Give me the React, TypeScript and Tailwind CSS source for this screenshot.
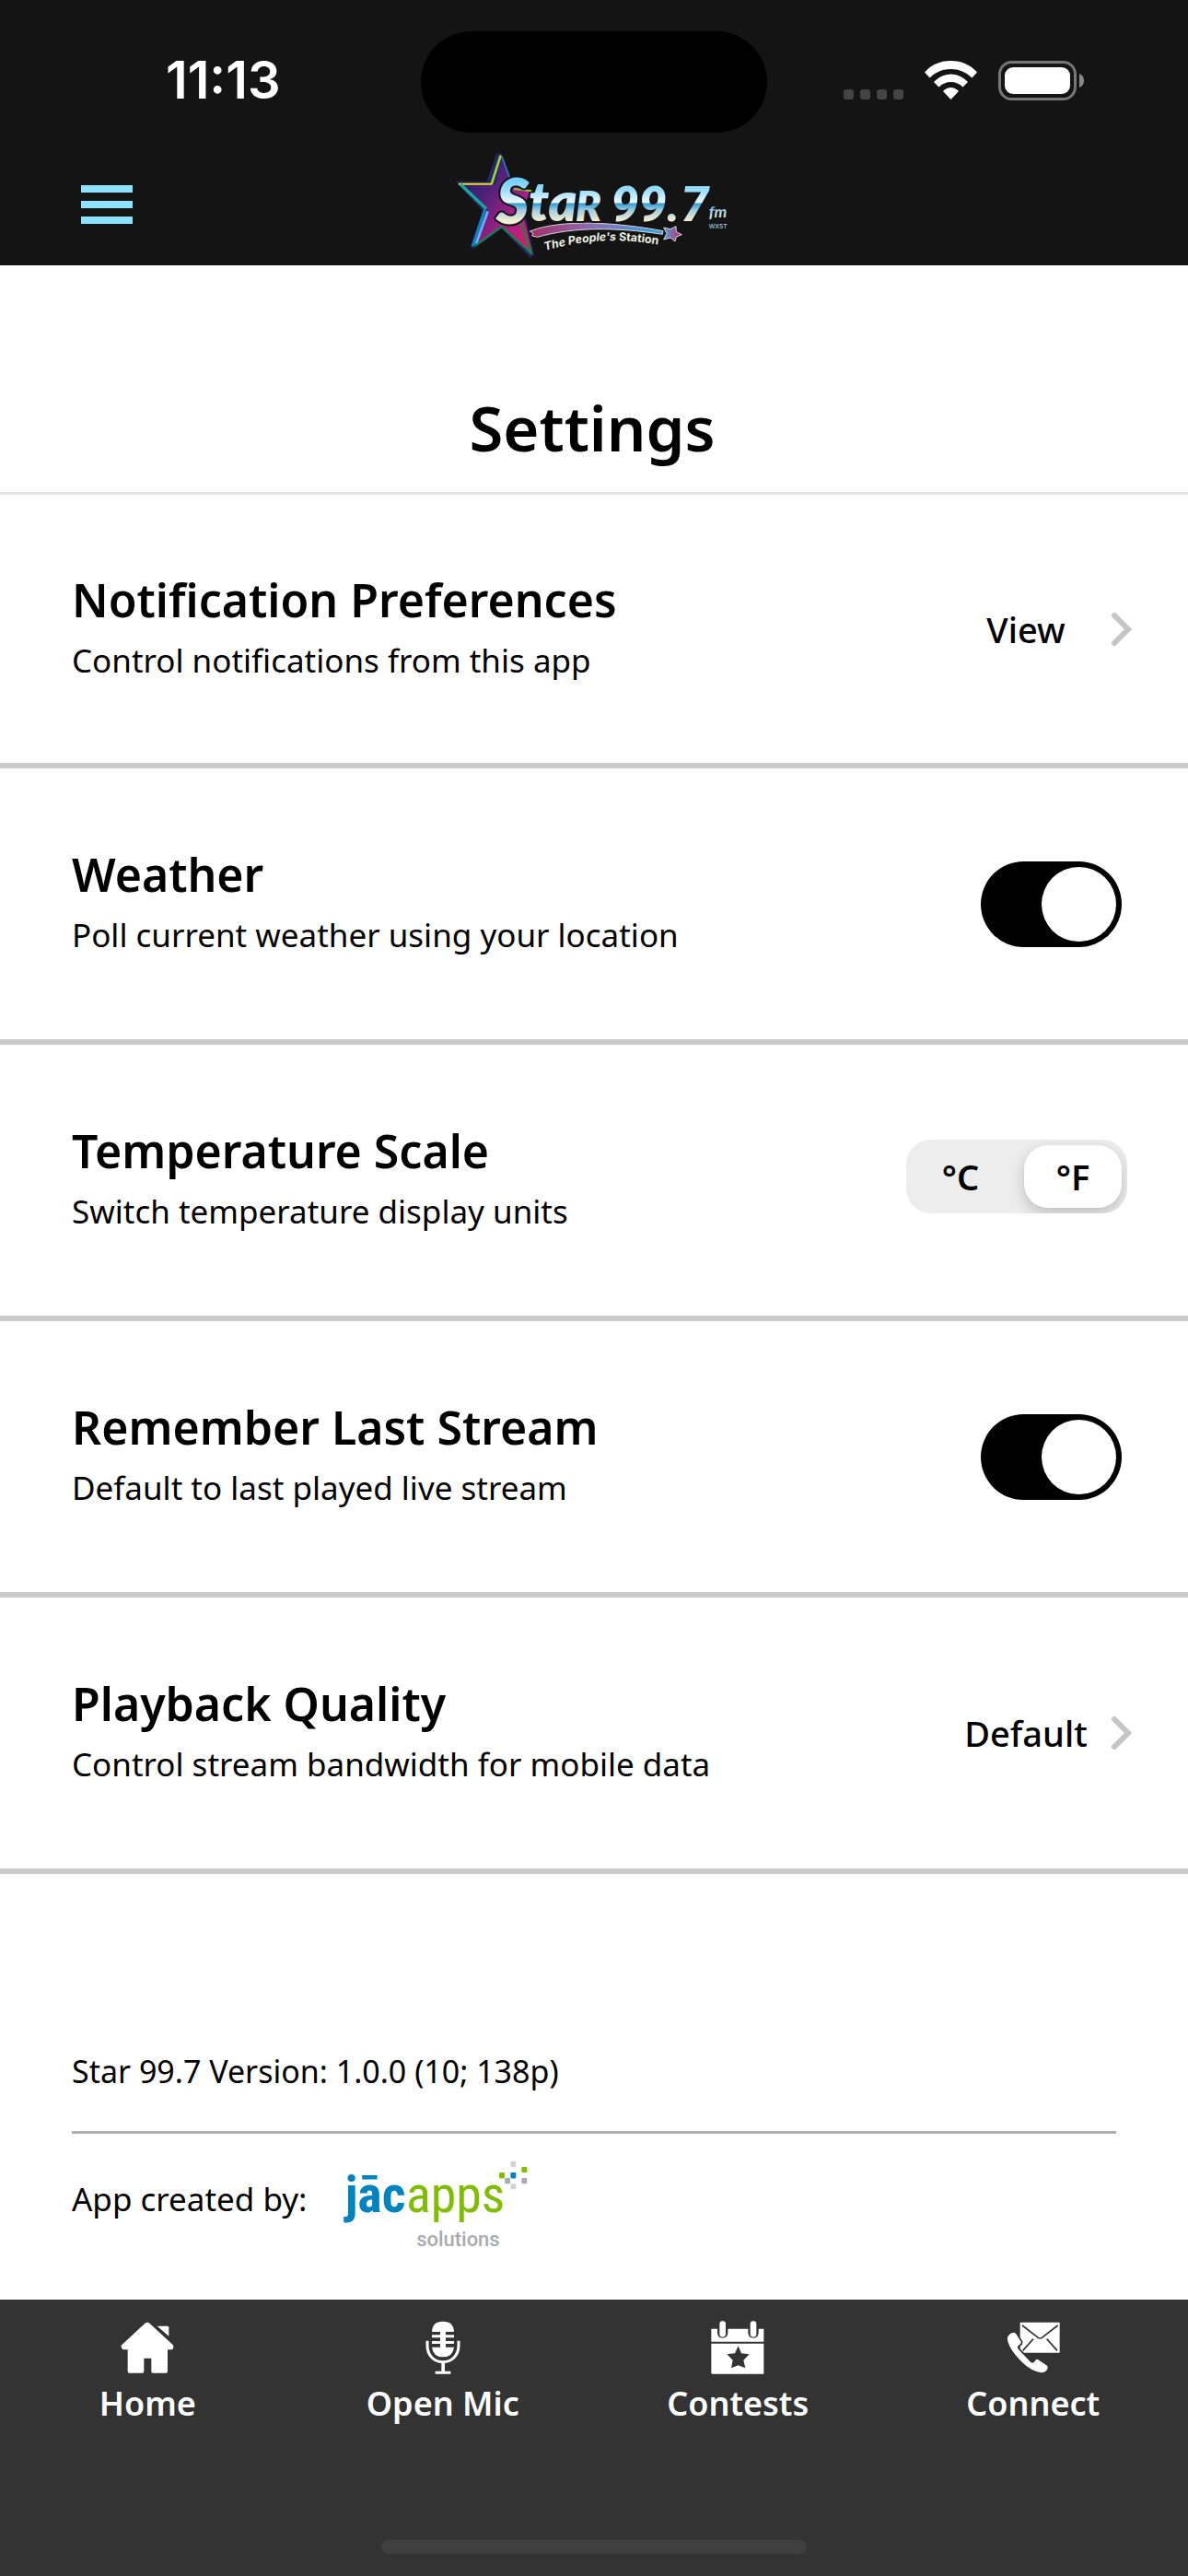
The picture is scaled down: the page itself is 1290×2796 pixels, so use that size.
import { useState } from 'react';
import type { ReactNode } from 'react';

function HomeIcon() {
  return (
    <svg viewBox="29 28 174 174" className="size-[58px] fill-white" aria-hidden="true">
      <path d="M110 35q7-4 13 1l76 70q4 6 1 12-2 4-6 4h-12v70q0 6-5 6h-43q-5 0-5-5v-43h-24v43q0 5-5 5H57q-5 0-5-6v-70H38q-8-3-7-14z" />
      <path d="M148 45h33q5 0 5 5v28z" />
    </svg>
  );
}

function MicIcon() {
  return (
    <svg viewBox="993 28 174 174" className="size-[58px] fill-white" aria-hidden="true">
      <path d="M1044 64q1-34 36-34t36 34z" />
      <path d="M1044 74h72v9h-72zM1044 94h72v9h-72zM1071 60h18v60h-18z" />
      <path d="M1044 114h72q-4 32-36 32t-36-32z" />
      <path
        d="M1029 93v15c0 32 22 54 51 54s51-22 51-54V93"
        fill="none"
        stroke="#fff"
        strokeWidth="9"
      />
      <path d="M1075 160h11v33h-11zM1055 192h50v9h-50z" />
    </svg>
  );
}

function CalendarIcon() {
  return (
    <svg viewBox="35 28 174 174" className="size-[58px] fill-white" aria-hidden="true">
      <path d="M36 54h171v42H36zM36 102h171v99H39l-3-3z" />
      <g stroke="#333" strokeWidth="6">
        <path d="M59 50v18q2 13 14 13t14-13V50zM159 50v18q2 13 14 13t14-13V50z" fill="#333" />
      </g>
      <rect x="63" y="29" width="20" height="52" rx="10" />
      <rect x="163" y="29" width="20" height="52" rx="10" />
      <path d="M124 110l10 24 26 3-19 19 6 26-23-9-23 9 5-26-19-19 26-3z" fill="#333" />
    </svg>
  );
}

function ContactIcon() {
  return (
    <svg viewBox="37 28 174 174" className="size-[58px] fill-white" aria-hidden="true">
      <path d="M81 33h129v99H81z" />
      <path
        d="M88 43l52 40q6 4 12 0l52-40M124 87l-34 38M168 87l34 38"
        fill="none"
        stroke="#333"
        strokeWidth="5"
      />
      <path
        d="M40 82q6-15 21-16 5 0 8 6l15 24q2 6-5 10-10 6-4 14l40 42q8 6 14-2 4-8 10-6l30 20q5 6-2 16-6 7-17 7-42-5-86-60-26-34-24-55z"
        stroke="#333"
        strokeWidth="10"
        paintOrder="stroke"
      />
    </svg>
  );
}

function StationLogo() {
  return (
    <svg viewBox="0 18 1050 396" className="h-[132px] w-[350px]" role="img" aria-label="Star 99.7 fm WXST, The People's Station">
      <defs>
        <linearGradient id="chrome" gradientUnits="userSpaceOnUse" x1="0" y1="130" x2="0" y2="285">
          <stop offset="0" stopColor="#6fcdfb" />
          <stop offset="0.25" stopColor="#9adcfc" />
          <stop offset="0.52" stopColor="#effaff" />
          <stop offset="0.53" stopColor="#2d9bd3" />
          <stop offset="0.68" stopColor="#a4cede" />
          <stop offset="0.9" stopColor="#f4eed3" />
        </linearGradient>
        <linearGradient id="starFill" x1="0" y1="0" x2="1" y2="1">
          <stop offset="0" stopColor="#1c1c66" />
          <stop offset="0.35" stopColor="#4a2177" />
          <stop offset="0.65" stopColor="#a31f87" />
          <stop offset="1" stopColor="#e51d62" />
        </linearGradient>
        <linearGradient id="trail" x1="0" y1="0" x2="1" y2="0">
          <stop offset="0" stopColor="#a62f68" />
          <stop offset="0.5" stopColor="#8571b5" />
          <stop offset="1" stopColor="#2da4e0" />
        </linearGradient>
        <linearGradient id="smallStar" x1="0" y1="0" x2="1" y2="0">
          <stop offset="0" stopColor="#4b9bd8" />
          <stop offset="1" stopColor="#c22c68" />
        </linearGradient>
      </defs>
      <g strokeLinejoin="round">
        <path d="M208 50l16 0 38 100 62 22-30 50 36 158-12 10-94-95-92 65-9-6 40-116-90-98 102 1z" fill="#262565" />
        <path d="M223 56l36 98 62 18-32 54 36 150-100-90-84 60 36-112-84-88 112 4z" fill="url(#starFill)" />
        <path d="M221 56l-30 94" fill="none" stroke="#9bd32d" strokeWidth="8" />
        <path d="M84 149h108" fill="none" stroke="#e3df21" strokeWidth="6" />
        <path d="M90 150l84 80" fill="none" stroke="#15a99b" strokeWidth="10" />
        <path d="M170 232l-40 120" fill="none" stroke="#0f80cb" strokeWidth="10" />
        <path d="M179 238l-38 106" fill="none" stroke="#6fb2ef" strokeWidth="8" />
        <path d="M138 350l86-62 98 88-40-112" fill="none" stroke="#108a44" strokeWidth="6" />
        <path d="M225 60l28 76" fill="none" stroke="#2690c0" strokeWidth="4" />
        <path d="M264 165l58 7" fill="none" stroke="#8dc92d" strokeWidth="6" />
      </g>
      <path
        d="M316 303C420 262 600 274 750 302l-2 11C600 290 460 288 341 322l-18-4 4-8z"
        fill="url(#trail)"
        stroke="#d9d3dc"
        strokeWidth="3"
      />
      <path
        d="M752 291l22 5 18-9 1 18 18 9-18 7-4 15-15-12-22 6 10-20z"
        fill="url(#smallStar)"
        stroke="#d9d3dc"
        strokeWidth="3"
      />
      <g
        fill="url(#chrome)"
        stroke="#141414"
        strokeWidth="12"
        strokeLinejoin="round"
        paintOrder="stroke"
        className="font-[Lato] font-extrabold italic"
      >
        <text x="206" y="278" fontSize="205">
          S
          <tspan x="312" y="270" fontSize="176">ta</tspan>
          <tspan x="464" y="270" fontSize="138">R</tspan>
        </text>
        <text x="580" y="270" fontSize="162" className="font-[Roboto] font-extrabold">99.7</text>
        <text x="899" y="258" fontSize="52" strokeWidth="0" className="font-bold">fm</text>
      </g>
      <text x="899" y="295" fontSize="20" fill="#9fd3e0" className="font-[Inter] font-medium">WXST</text>
      <path id="taglineCurve" d="M366 366Q550 312 740 348" fill="none" />
      <text fontSize="37" fill="#eef3e4" className="font-[Inter] font-bold">
        <textPath href="#taglineCurve">
          <tspan className="italic">The People's</tspan> Station
        </textPath>
      </text>
    </svg>
  );
}

function JacappsLogo() {
  return (
    <svg viewBox="95 70 610 300" className="h-[100px] w-[203px]" role="img" aria-label="jacapps solutions">
      <g fontSize="168" className='font-["Roboto_Condensed",Roboto,sans-serif]'>
        <text x="100" y="244" fill="#0083be" className="font-bold">
          jāc
          <tspan x="299" fill="#80bc00" className="font-normal">apps</tspan>
        </text>
      </g>
      <text x="333" y="356" fontSize="66" fill="#a9abae" className="font-[Roboto] font-medium">solutions</text>
      <g>
        <rect x="640" y="78" width="18" height="19" rx="4" fill="#d1d3d4" />
        <rect x="676" y="97" width="18" height="18" rx="4" fill="#80bc00" />
        <rect x="603" y="115" width="18" height="19" rx="4" fill="#80bc00" />
        <rect x="640" y="115" width="18" height="19" rx="4" fill="#0083be" />
        <rect x="621" y="133" width="18" height="19" rx="4" fill="#a9abae" />
        <rect x="676" y="133" width="18" height="19" rx="4" fill="#a9abae" />
        <rect x="640" y="152" width="18" height="18" rx="4" fill="#d1d3d4" />
      </g>
    </svg>
  );
}

function StatusBar() {
  return (
    <div className="relative flex h-[156px] items-center justify-between pt-[18px] pr-[113px] pl-[180px]">
      <time className="font-[Inter,sans-serif] text-[56px] leading-[60px] font-semibold">11:13</time>
      <div className="absolute top-[34px] left-1/2 h-[110px] w-[376px] -translate-x-1/2 rounded-full bg-black" />
      <svg viewBox="916 65 261 43" className="h-[43px] w-[261px]" role="img" aria-label="No signal, Wi-Fi, battery full">
        <g fill="#444">
          <rect x="916" y="96" width="11" height="11" rx="3" />
          <rect x="934" y="96" width="11" height="11" rx="3" />
          <rect x="952" y="96" width="11" height="11" rx="3" />
          <rect x="970" y="96" width="11" height="11" rx="3" />
        </g>
        <g fill="#fff">
          <path d="M1004 77.500Q1015 65 1032.500 65T1061 77.500L1055.500 83.500Q1046 74 1032.500 74T1009.500 83.500Z" />
          <path d="M1014 88Q1022 79.500 1032.500 79.500T1051 88L1045.500 93.500Q1040 88 1032.500 88T1019.500 93.500Z" />
          <path d="M1024 98Q1028 94 1032.500 94T1041 98L1032.500 107Z" />
        </g>
        <rect x="1085.500" y="66.500" width="82" height="40" rx="13" fill="none" stroke="#767676" strokeWidth="3" />
        <rect x="1091" y="72" width="71" height="29" rx="9" fill="#fff" />
        <path d="M1172 79q5 2 5 7.500t-5 7.500z" fill="#8a8a8a" />
      </svg>
    </div>
  );
}

function Row({ title, detail, children }: { title: string; detail: string; children: ReactNode }) {
  return (
    <li className="flex h-[300px] items-center justify-between border-b-[6px] border-[#cbcbcb] pl-[78px]">
      <div>
        <h2 className="text-[50px] leading-[56px] font-semibold">{title}</h2>
        <p className="mt-3 text-[35px] leading-[52px]">{detail}</p>
      </div>
      {children}
    </li>
  );
}

function Link({ label }: { label: string }) {
  return (
    <button type="button" className="mr-[60px] flex items-center gap-[22px] text-[38px] leading-[52px] font-medium">
      <span className="w-[140px] text-center">{label}</span>
      <svg viewBox="0 0 24 40" className="h-[40px] w-[24px]" aria-hidden="true">
        <path d="M4 5l15 15L4 35" fill="none" stroke="#c5c5c7" strokeWidth="6" strokeLinecap="round" />
      </svg>
    </button>
  );
}

function Toggle({ label }: { label: string }) {
  const [on, setOn] = useState(true);
  return (
    <label className="mr-[72px] cursor-pointer">
      <input
        type="checkbox"
        role="switch"
        aria-label={label}
        checked={on}
        onChange={() => setOn(!on)}
        className="peer sr-only"
      />
      <span className="flex h-[93px] w-[153px] items-center justify-start rounded-full bg-gray-400 p-[6px] peer-checked:justify-end peer-checked:bg-black">
        <span className="size-[81px] rounded-full bg-white" />
      </span>
    </label>
  );
}

function ScalePicker() {
  const [unit, setUnit] = useState('F');
  return (
    <div role="radiogroup" aria-label="Temperature Scale" className="mr-[66px] mb-2 flex h-[80px] w-[240px] justify-between overflow-hidden rounded-[27px] bg-[#ededed] p-[6px]">
      {['C', 'F'].map((u) => (
        <label key={u} className="cursor-pointer">
          <input
            type="radio"
            name="scale"
            value={u}
            checked={unit === u}
            onChange={() => setUnit(u)}
            className="peer sr-only"
          />
          <span className="flex h-[68px] w-[106px] items-center justify-center rounded-[26px] text-[38px] leading-[52px] font-semibold peer-checked:bg-white peer-checked:shadow-[0_6px_16px_rgba(0,0,0,0.2)]">
            °{u}
          </span>
        </label>
      ))}
    </div>
  );
}

const tabs = [
  { label: 'Home', icon: <HomeIcon /> },
  { label: 'Open Mic', icon: <MicIcon /> },
  { label: 'Contests', icon: <CalendarIcon /> },
  { label: 'Connect', icon: <ContactIcon /> },
];

export default function App() {
  return (
    <div className='flex min-h-screen flex-col bg-white font-["Noto_Sans",sans-serif] text-black'>
      <header className="bg-[#141414] text-white">
        <StatusBar />
        <div className="grid h-[132px] grid-cols-[1fr_auto_1fr] items-center">
          <button type="button" aria-label="Menu" className="ml-[88px] flex w-[56px] flex-col gap-[9px]">
            <span className="h-[8px] bg-[#8de3ff]" />
            <span className="h-[8px] bg-[#8de3ff]" />
            <span className="h-[8px] bg-[#8de3ff]" />
          </button>
          <StationLogo />
        </div>
      </header>

      <main className="flex flex-1 flex-col">
        <h1 className="flex h-[246px] items-end justify-center pr-[4px] pb-[25px] text-[67px] leading-[90px] font-semibold">
          Settings
        </h1>
        <ul className="border-t-[3px] border-[#e3e3e3] [&>li:first-child]:h-[297px]">
          <Row title="Notification Preferences" detail="Control notifications from this app">
            <Link label="View" />
          </Row>
          <Row title="Weather" detail="Poll current weather using your location">
            <Toggle label="Weather" />
          </Row>
          <Row title="Temperature Scale" detail="Switch temperature display units">
            <ScalePicker />
          </Row>
          <Row title="Remember Last Stream" detail="Default to last played live stream">
            <Toggle label="Remember Last Stream" />
          </Row>
          <Row title="Playback Quality" detail="Control stream bandwidth for mobile data">
            <Link label="Default" />
          </Row>
        </ul>
        <section className="mx-[78px] mt-auto leading-[52px]">
          <p className="border-b-[3px] border-[#b0b0b0] pb-[39px] text-[34px]">Star 99.7 Version: 1.0.0 (10; 138p)</p>
          <div className="flex h-[180px] items-center gap-[39px] pb-[38px] text-[35px]">
            <span>App created by:</span>
            <div className="pt-[12px]">
              <JacappsLogo />
            </div>
          </div>
        </section>
      </main>

      <footer className="flex h-[300px] flex-col justify-between bg-[#333333] pb-[24px] text-white">
        <nav className="grid grid-cols-4 pt-[23px] pr-2">
          {tabs.map((tab) => (
            <a key={tab.label} href="#" className="flex flex-col items-center gap-[8px] text-[36px] leading-[48px] font-semibold">
              {tab.icon}
              {tab.label}
            </a>
          ))}
        </nav>
        <div className="h-[15px] w-[462px] self-center rounded-full bg-[#3f3f3f]" />
      </footer>
    </div>
  );
}
